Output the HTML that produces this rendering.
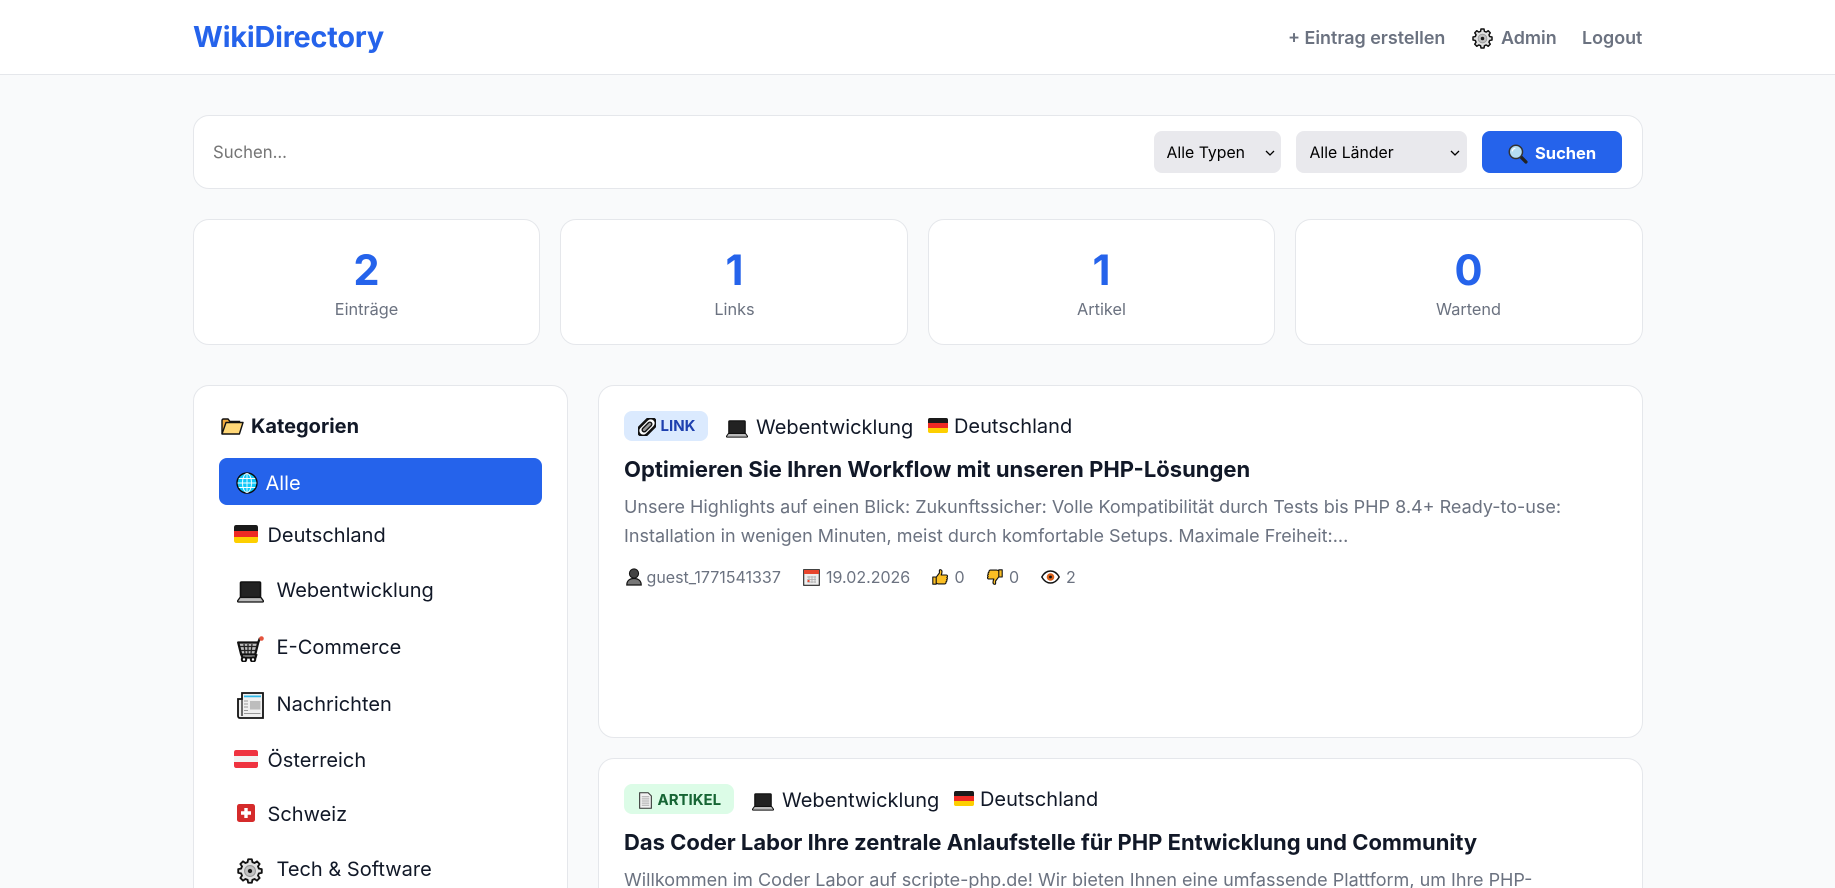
<!DOCTYPE html>
<html lang="de"><head><meta charset="utf-8"><title>WikiDirectory</title>
<style>
*{box-sizing:border-box;margin:0;padding:0}
html,body{width:1835px;height:888px;overflow:hidden;background:#f9fafb}
body{position:relative;font-family:Inter,"Liberation Sans",sans-serif;color:#111827}
.b{position:absolute;background:#fff;border:1px solid #e5e7eb;border-radius:16px}
.t{position:absolute;white-space:nowrap;line-height:30px;height:30px}
svg.i{position:absolute;overflow:visible}
a{text-decoration:none;color:inherit}
.nav{font-size:17.9px;font-weight:600;color:#6b7280}
.num{font-size:41.6px;font-weight:700;color:#2563eb;width:347px;text-align:center;line-height:50px;height:50px}
.lab{font-size:16.3px;color:#6b7280;width:347px;text-align:center}
.cat{font-size:20px;color:#111827}
.ti{font-size:22px;font-weight:700;color:#111827}
.de{font-size:18px;color:#6b7280}
.me{font-size:16px;color:#6b7280}
.tag{font-size:15px;font-weight:700}
select{position:absolute;height:42px;background:#e9e9ed;border:0;border-radius:8px;font:15.8px Inter,"Liberation Sans",sans-serif;color:#000;padding:0 8px 0 13.5px;appearance:none;-webkit-appearance:none}
</style></head><body>
<svg width="0" height="0" style="position:absolute"><defs>
<symbol id="gear" viewBox="0 0 24 24"><polygon transform="translate(12 12)" points="8.21,-2.2 10.86,-1.72 10.86,1.72 8.21,2.2 7.36,4.25 8.9,6.46 6.46,8.9 4.25,7.36 2.2,8.21 1.72,10.86 -1.72,10.86 -2.2,8.21 -4.25,7.36 -6.46,8.9 -8.9,6.46 -7.36,4.25 -8.21,2.2 -10.86,1.72 -10.86,-1.72 -8.21,-2.2 -7.36,-4.25 -8.9,-6.46 -6.46,-8.9 -4.25,-7.36 -2.2,-8.21 -1.72,-10.86 1.72,-10.86 2.2,-8.21 4.25,-7.36 6.46,-8.9 8.9,-6.46 7.36,-4.25" fill="#e2e2e2" stroke="#111" stroke-width="1.7" stroke-linejoin="round"/><circle cx="12" cy="12" r="5" fill="#c2c2c2" stroke="#999" stroke-width="1"/><circle cx="12" cy="12" r="2" fill="#1a1a1a"/></symbol>
<symbol id="laptop" viewBox="0 0 27 22"><rect x="3.5" y="1" width="20" height="15.5" rx="1" fill="#222" stroke="#111" stroke-width="1.6"/><path d="M3 16.5h21l2.3 3.2c.3.7 0 1.3-.8 1.3H1.5c-.8 0-1.1-.6-.8-1.3z" fill="#bbb" stroke="#111" stroke-width="1.3"/></symbol>
<symbol id="cart" viewBox="0 0 27 26"><path d="M1.200 6.500h20l-3 12H4.200z" fill="#bdbdbd" stroke="#111" stroke-width="2.300" stroke-linejoin="round"/><path d="M3 10.500h16.500M4 14.500h14.500M7 8l1 9.500M11 8v9.500M15 8l-1 9.500" stroke="#222" stroke-width="1.300" fill="none"/><path d="M21 7l2-5" fill="none" stroke="#111" stroke-width="2.300"/><circle cx="24.500" cy="2.500" r="2.300" fill="#e5533d"/><path d="M4.200 18l1.200 3.500h13.100l1-3.500" fill="none" stroke="#111" stroke-width="2.300"/><circle cx="7" cy="23.500" r="2.200" fill="#fff" stroke="#111" stroke-width="2"/><circle cx="16" cy="23.500" r="2.200" fill="#fff" stroke="#111" stroke-width="2"/></symbol>
<symbol id="news" viewBox="0 0 27 27"><path d="M5 1h21v25H3c-1.200 0-2-.8-2-2V7h4z" fill="#efefef" stroke="#111" stroke-width="1.800"/><path d="M7 3.500h17v1.800H7z" fill="#30b8e8"/><rect x="13" y="9" width="10.500" height="8.500" fill="#bdbdbd"/><path d="M7 9h4M7 12h4M7 15h4M7 18.500h4M7 21.500h16.500" stroke="#999" stroke-width="1.100"/><path d="M5 7v17" stroke="#111" stroke-width="1.200"/></symbol>
<symbol id="globe" viewBox="0 0 22 22"><circle cx="11" cy="11" r="10" fill="#10c8f8" stroke="#0a0a0a" stroke-width="1.400"/><g fill="none" stroke="#f6fdff" stroke-width=".9"><ellipse cx="11" cy="11" rx="4.500" ry="9.500"/><path d="M11 1.500v19M1.500 11h19M2.800 6.500h16.400M2.800 15.500h16.400"/></g></symbol>
<symbol id="de" viewBox="0 0 24 18"><clipPath id="c1"><rect width="24" height="18" rx="2.200"/></clipPath><g clip-path="url(#c1)"><rect width="24" height="6" fill="#1a1a1a"/><rect y="6" width="24" height="6" fill="#ee2a24"/><rect y="12" width="24" height="6" fill="#fdcf00"/></g></symbol>
<symbol id="at" viewBox="0 0 24 18"><clipPath id="c2"><rect width="24" height="18" rx="2.200"/></clipPath><g clip-path="url(#c2)"><rect width="24" height="18" fill="#ef3340"/><rect y="6" width="24" height="6" fill="#f2f2f2"/></g></symbol>
<symbol id="ch" viewBox="0 0 18 18"><rect width="18" height="18" rx="2.400" fill="#d52b2b"/><path d="M7.300 4h3.400v3.300H14v3.400h-3.300V14H7.300v-3.300H4V7.300h3.300z" fill="#fff"/></symbol>
<symbol id="folder" viewBox="0 0 23 17"><path d="M1 16V2.500C1 1.600 1.600 1 2.500 1H7l2 2.500h9.500V6" fill="#f2a93b" stroke="#111" stroke-width="1.400"/><path d="M1 16 5 4.500h17l-3.600 11.500z" fill="#ffd777" stroke="#111" stroke-width="1.400" stroke-linejoin="round"/></symbol>
<symbol id="mag" viewBox="0 0 19 19"><path d="M11.500 11.500 17 17" stroke="#222" stroke-width="3.200" stroke-linecap="round"/><circle cx="7.500" cy="7.500" r="6.300" fill="#b5def3" stroke="#333" stroke-width="1.400"/><path d="M4 7a3.500 3.500 0 0 1 3-3" fill="none" stroke="#fff" stroke-width="1.200"/></symbol>
<symbol id="clip" viewBox="0 0 18 18"><g transform="rotate(-45 9 9)"><rect x="-1.500" y="3.800" width="21" height="10.400" rx="5.200" fill="#fff" stroke="#111" stroke-width="2.600"/><rect x="3" y="7" width="12" height="4" rx="2" fill="#999" stroke="#111" stroke-width="1.400"/></g></symbol>
<symbol id="user" viewBox="0 0 16 18"><circle cx="8" cy="5.500" r="4.600" fill="#444" stroke="#111"/><path d="M.8 17c0-4.500 3-6.500 7.200-6.500s7.200 2 7.200 6.500z" fill="#777" stroke="#111" stroke-width="1.200"/></symbol>
<symbol id="cal" viewBox="0 0 17 17"><rect x=".7" y=".7" width="15.600" height="15.600" fill="#eee" stroke="#222" stroke-width="1.100"/><rect x="1" y="1" width="15" height="4" fill="#e8452c"/><path d="M4 8h9M4 10.500h9M4 13h9M6 7v7M9 7v7M12 7v7" stroke="#aaa" stroke-width=".8"/><rect x="4.500" y="11" width="2" height="2" fill="#e8452c"/></symbol>
<symbol id="up" viewBox="0 0 16 16"><path d="M.8 8h3.400v7.200H.8zM4.200 8.200 7.400 4V1.400c0-1.200 2.600-1 2.600 1.200 0 1.200-.4 2.400-.8 3.400h5c1.600 0 1.600 2 .6 2.400.9.600.7 2-.2 2.300.6.800.3 1.900-.6 2.100.3 1-.3 2.100-1.400 2.100H6.500c-1 0-1.600-.4-2.300-.8z" fill="#fbbf24" stroke="#111" stroke-width="1.100" stroke-linejoin="round"/></symbol>
<symbol id="down" viewBox="0 0 16 16"><g transform="translate(16 16) rotate(180)"><path d="M.8 8h3.400v7.200H.8zM4.200 8.200 7.400 4V1.400c0-1.200 2.600-1 2.600 1.200 0 1.200-.4 2.400-.8 3.400h5c1.600 0 1.600 2 .6 2.400.9.600.7 2-.2 2.300.6.800.3 1.900-.6 2.100.3 1-.3 2.100-1.400 2.100H6.500c-1 0-1.600-.4-2.300-.8z" fill="#fbbf24" stroke="#111" stroke-width="1.100" stroke-linejoin="round"/></g></symbol>
<symbol id="eye" viewBox="0 0 19 14"><path d="M.8 7C3 3 6 1 9.500 1s6.500 2 8.700 6c-2.200 4-5.200 6-8.700 6S3 11 .8 7z" fill="#fff" stroke="#111" stroke-width="1.400"/><circle cx="9.500" cy="7" r="3.800" fill="#d9601a"/><circle cx="9.500" cy="7" r="1.400" fill="#111"/></symbol>
<symbol id="doc" viewBox="0 0 16 16"><path d="M2.500.7h8L13.500 3.700v11.600h-11z" fill="#f2f2f2" stroke="#333" stroke-width="1"/><path d="M4.500 4.500h7M4.500 6.500h7M4.500 8.500h7M4.500 10.500h7M4.500 12.500h7" stroke="#aaa" stroke-width=".9"/></symbol>
</defs></svg>

<div style="position:absolute;left:0;top:0;width:1835px;height:75px;background:#fff;border-bottom:1px solid #e5e7eb"></div>
<a class="t" style="left:193px;top:22px;font-size:28.8px;font-weight:700;letter-spacing:-.18px;color:#2563eb">WikiDirectory</a>
<a class="t nav" style="left:1288px;top:24px">+ Eintrag erstellen</a>
<svg class="i" style="left:1472px;top:27.500px" width="21" height="21"><use href="#gear"/></svg>
<a class="t nav" style="left:1501px;top:24px">Admin</a>
<a class="t nav" style="left:1582px;top:24px">Logout</a>

<div class="b" style="left:193px;top:115px;width:1450px;height:74px"></div>
<span class="t" style="left:213px;top:138px;font-size:16.7px;color:#757575">Suchen...</span>
<select style="left:1154px;top:131px;width:127px;padding-left:12.500px"><option>Alle Typen</option></select>
<select style="left:1296px;top:131px;width:171px"><option>Alle Länder</option></select>
<svg class="i" style="left:1265px;top:150px" width="10" height="6"><path d="M1 1l4 4 4-4" fill="none" stroke="#000" stroke-width="1.300"/></svg>
<svg class="i" style="left:1450px;top:150px" width="10" height="6"><path d="M1 1l4 4 4-4" fill="none" stroke="#000" stroke-width="1.300"/></svg>
<div style="position:absolute;left:1482px;top:131px;width:140px;height:42px;background:#2563eb;border-radius:8px"></div>
<svg class="i" style="left:1508px;top:144px" width="20" height="20"><use href="#mag"/></svg>
<span class="t" style="left:1535px;top:138px;font-size:16.5px;font-weight:700;color:#fff">Suchen</span>

<div class="b" style="left:193px;top:219px;width:347px;height:126px"></div>
<div class="b" style="left:560px;top:219px;width:348px;height:126px"></div>
<div class="b" style="left:928px;top:219px;width:347px;height:126px"></div>
<div class="b" style="left:1295px;top:219px;width:348px;height:126px"></div>
<span class="t num" style="left:193px;top:246px">2</span><span class="t lab" style="left:193px;top:294px">Einträge</span>
<span class="t num" style="left:561px;top:246px">1</span><span class="t lab" style="left:561px;top:294px">Links</span>
<span class="t num" style="left:928px;top:246px">1</span><span class="t lab" style="left:928px;top:294px">Artikel</span>
<span class="t num" style="left:1295px;top:246px">0</span><span class="t lab" style="left:1295px;top:294px">Wartend</span>

<div class="b" style="left:193px;top:385px;width:375px;height:600px"></div>
<svg class="i" style="left:221px;top:418px" width="23" height="17"><use href="#folder"/></svg>
<span class="t" style="left:251px;top:411px;font-size:20px;font-weight:700">Kategorien</span>
<div style="position:absolute;left:219px;top:458px;width:323px;height:47px;background:#2563eb;border-radius:8px"></div>
<svg class="i" style="left:236px;top:472px" width="22" height="22"><use href="#globe"/></svg>
<span class="t cat" style="left:265.500px;top:468px;color:#fff">Alle</span>
<svg class="i" style="left:234px;top:525px" width="24" height="18"><use href="#de"/></svg>
<span class="t cat" style="left:267.500px;top:520px">Deutschland</span>
<svg class="i" style="left:237px;top:581px" width="27" height="22"><use href="#laptop"/></svg>
<span class="t cat" style="left:276.500px;top:575px">Webentwicklung</span>
<svg class="i" style="left:237px;top:636px" width="27" height="26"><use href="#cart"/></svg>
<span class="t cat" style="left:276.500px;top:632px">E-Commerce</span>
<svg class="i" style="left:237px;top:692px" width="27" height="27"><use href="#news"/></svg>
<span class="t cat" style="left:276.500px;top:689px">Nachrichten</span>
<svg class="i" style="left:234px;top:750px" width="24" height="18"><use href="#at"/></svg>
<span class="t cat" style="left:267.500px;top:745px">Österreich</span>
<svg class="i" style="left:237px;top:804px" width="18" height="18"><use href="#ch"/></svg>
<span class="t cat" style="left:267.500px;top:799px">Schweiz</span>
<svg class="i" style="left:237px;top:858px" width="26" height="26"><use href="#gear"/></svg>
<span class="t cat" style="left:276.500px;top:854px">Tech &amp; Software</span>

<div class="b" style="left:598px;top:385px;width:1045px;height:353px"></div>
<div style="position:absolute;left:624px;top:411px;width:84px;height:30px;background:#dbeafe;border-radius:8px"></div>
<svg class="i" style="left:637.500px;top:417.500px" width="18" height="18"><use href="#clip"/></svg>
<span class="t tag" style="left:660.500px;top:411px;color:#1e40af">LINK</span>
<svg class="i" style="left:726px;top:420px" width="22" height="18"><use href="#laptop"/></svg>
<span class="t cat" style="left:756px;top:412px">Webentwicklung</span>
<svg class="i" style="left:928px;top:418px" width="20" height="15"><use href="#de"/></svg>
<span class="t cat" style="left:954px;top:411px">Deutschland</span>
<a class="t ti" style="left:624px;top:455px">Optimieren Sie Ihren Workflow mit unseren PHP-Lösungen</a>
<span class="t de" style="left:624px;top:493px">Unsere Highlights auf einen Blick: Zukunftssicher: Volle Kompatibilität durch Tests bis PHP 8.4+ Ready-to-use:</span>
<span class="t de" style="left:624px;top:522px">Installation in wenigen Minuten, meist durch komfortable Setups. Maximale Freiheit:...</span>
<svg class="i" style="left:626px;top:568px" width="16" height="18"><use href="#user"/></svg>
<span class="t me" style="left:646.500px;top:562px">guest_1771541337</span>
<svg class="i" style="left:803px;top:569px" width="17" height="17"><use href="#cal"/></svg>
<span class="t me" style="left:826px;top:562px">19.02.2026</span>
<svg class="i" style="left:932px;top:569px" width="16" height="16"><use href="#up"/></svg>
<span class="t me" style="left:954.500px;top:562px">0</span>
<svg class="i" style="left:987px;top:569px" width="16" height="16"><use href="#down"/></svg>
<span class="t me" style="left:1009px;top:562px">0</span>
<svg class="i" style="left:1041px;top:570px" width="19" height="14"><use href="#eye"/></svg>
<span class="t me" style="left:1066px;top:562px">2</span>

<div class="b" style="left:598px;top:758px;width:1045px;height:353px"></div>
<div style="position:absolute;left:624px;top:784px;width:110px;height:30px;background:#dcfce7;border-radius:8px"></div>
<svg class="i" style="left:636.500px;top:791.500px" width="17" height="17"><use href="#doc"/></svg>
<span class="t tag" style="left:657.500px;top:785px;color:#166534">ARTIKEL</span>
<svg class="i" style="left:752px;top:793px" width="22" height="18"><use href="#laptop"/></svg>
<span class="t cat" style="left:782px;top:785px">Webentwicklung</span>
<svg class="i" style="left:954px;top:791px" width="20" height="15"><use href="#de"/></svg>
<span class="t cat" style="left:980px;top:784px">Deutschland</span>
<a class="t ti" style="left:624px;top:828px;font-size:21.970px">Das Coder Labor Ihre zentrale Anlaufstelle für PHP Entwicklung und Community</a>
<span class="t de" style="left:624px;top:866px">Willkommen im Coder Labor auf scripte-php.de! Wir bieten Ihnen eine umfassende Plattform, um Ihre PHP-</span>
</body></html>
